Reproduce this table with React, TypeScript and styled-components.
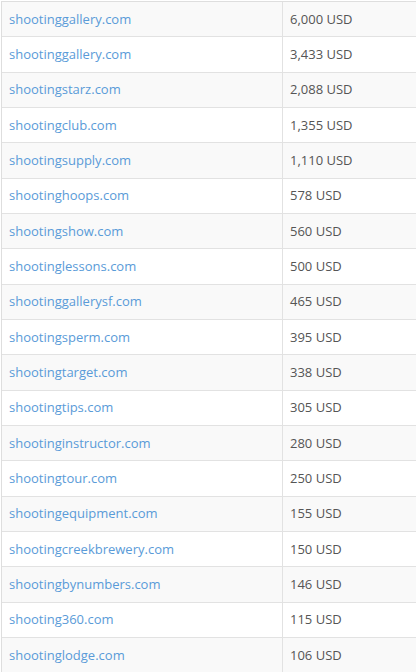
import { FC } from "react";
import styled, { createGlobalStyle } from "styled-components";

const GlobalStyle = createGlobalStyle`
    html, body {
        margin: 0;
        padding: 0;
        background: #ffffff;
        overflow: hidden;
    }
`;

const PageWrapper = styled.div`
    width: 416px;
    height: 672px;
    overflow: hidden;
    padding: 1px 0 0 1px;
    box-sizing: border-box;
    font-family: 'Open Sans', 'Liberation Sans', sans-serif;
`;

const Table = styled.div`
    width: 520px;
    border-left: 1px solid #dedede;
    border-top: 1px solid #dedede;
`;

const Row = styled.div<{ striped: boolean }>`
    display: grid;
    grid-template-columns: 281px 1fr;
    height: 35.33px;
    box-sizing: border-box;
    border-bottom: 1px solid #e2e2e2;
    background: ${({ striped }) => (striped ? "#f9f9f9" : "#ffffff")};
`;

const Cell = styled.div<{ divider?: boolean }>`
    display: flex;
    align-items: center;
    padding: 0 7px 1px;
    font-size: 13px;
    border-right: ${({ divider }) => (divider ? "1px solid #e2e2e2" : "none")};
`;

const DomainLink = styled.a`
    color: #5a9bd8;
    text-decoration: none;
`;

const Price = styled.span`
    color: #555555;
`;

const rows: [string, string][] = [
    ["shootinggallery.com", "6,000"],
    ["shootinggallery.com", "3,433"],
    ["shootingstarz.com", "2,088"],
    ["shootingclub.com", "1,355"],
    ["shootingsupply.com", "1,110"],
    ["shootinghoops.com", "578"],
    ["shootingshow.com", "560"],
    ["shootinglessons.com", "500"],
    ["shootinggallerysf.com", "465"],
    ["shootingsperm.com", "395"],
    ["shootingtarget.com", "338"],
    ["shootingtips.com", "305"],
    ["shootinginstructor.com", "280"],
    ["shootingtour.com", "250"],
    ["shootingequipment.com", "155"],
    ["shootingcreekbrewery.com", "150"],
    ["shootingbynumbers.com", "146"],
    ["shooting360.com", "115"],
    ["shootinglodge.com", "106"],
];

const App: FC = () => {
    return (
        <PageWrapper>
            <GlobalStyle />
            <Table>
                {rows.map(([domain, price], i) => (
                    <Row key={i} striped={i % 2 === 0}>
                        <Cell divider>
                            <DomainLink href="#">{domain}</DomainLink>
                        </Cell>
                        <Cell>
                            <Price>{price} USD</Price>
                        </Cell>
                    </Row>
                ))}
            </Table>
        </PageWrapper>
    );
};

export default App;
